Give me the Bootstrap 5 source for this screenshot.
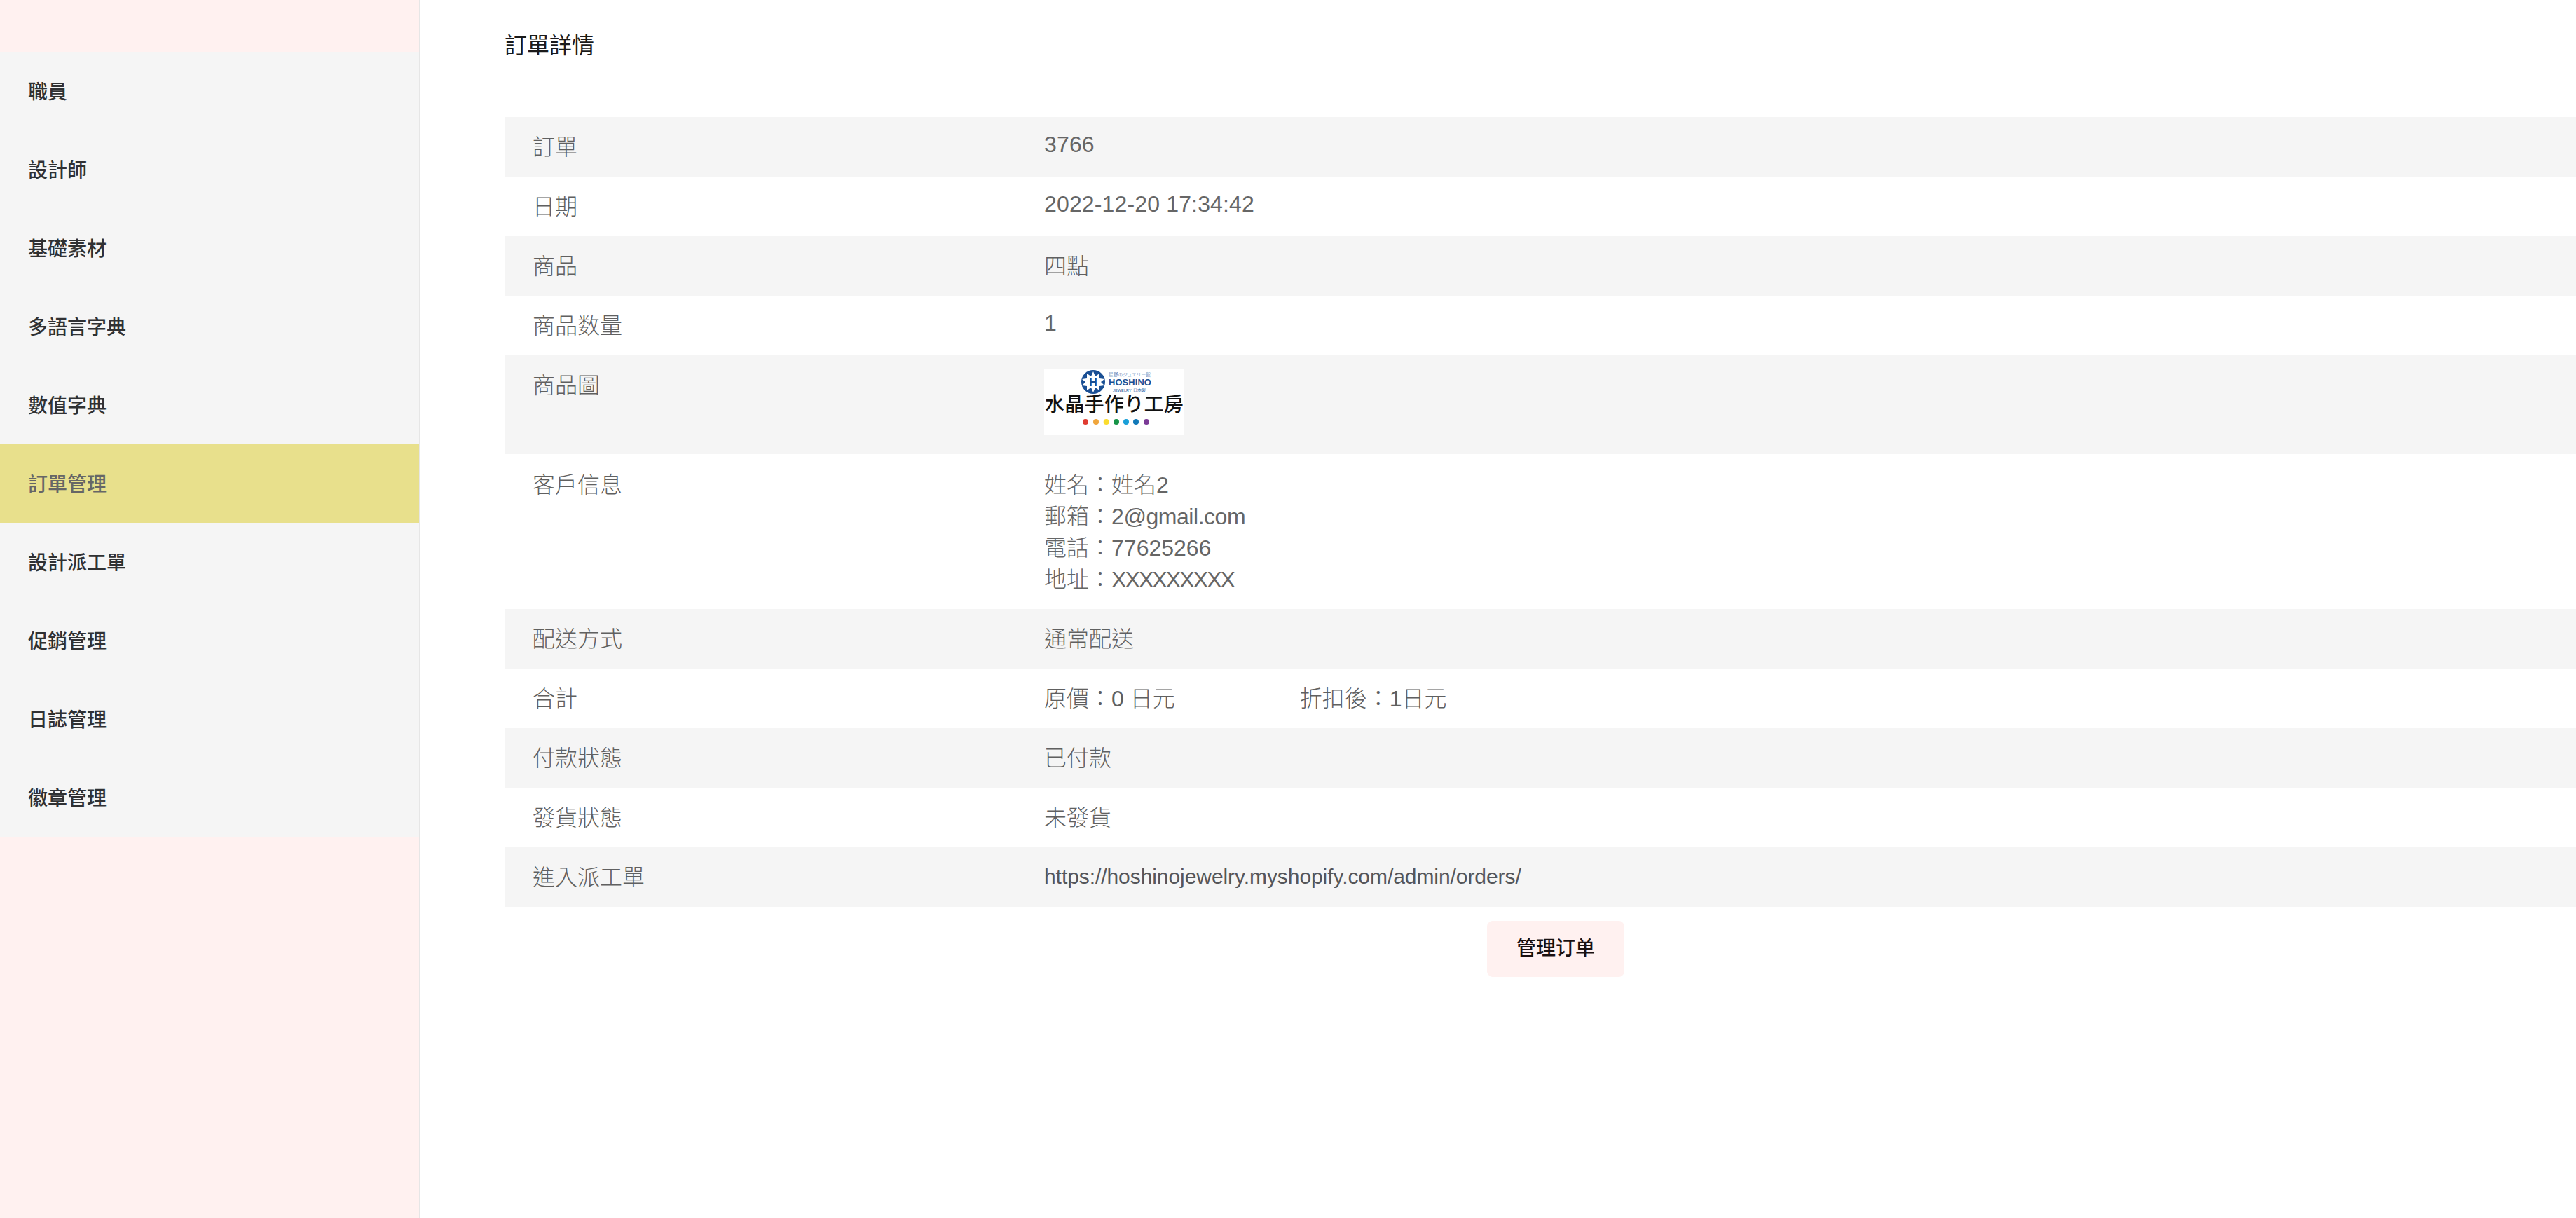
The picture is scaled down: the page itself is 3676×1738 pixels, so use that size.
<!DOCTYPE html>
<html lang="zh-Hant">
<head>
<meta charset="utf-8">
<title>訂單詳情</title>
<link href="https://cdn.jsdelivr.net/npm/bootstrap@5.3.0/dist/css/bootstrap.min.css" rel="stylesheet">
<style>
html,body{height:100%;overflow:hidden}
body{font-family:"Liberation Sans","Noto Sans CJK TC",sans-serif;background:#fff;color:#666}
.app-shell{height:1738px}
.side-bar{width:600px;flex:none;background:#fff1f0;border-right:2px solid #e6e6e6;padding-top:74px}
.side-link{display:flex;align-items:center;height:112px;padding:3px 0 0 40px;background:#f5f5f5;color:#303133;font-size:28px;font-weight:500;text-decoration:none}
.side-link.is-current{background:#e8e08c;color:#666}
.main-pane{flex:1 1 auto;min-width:0;overflow:hidden;padding-left:120px}
.detail-wrap{width:3000px}
.page-heading{font-size:32px;line-height:44px;color:#1a1a1a;margin:0;padding-top:43px;height:167px;font-weight:400}
.info-row{display:flex;min-height:85px;font-size:32px;line-height:45px;font-weight:300;color:#606060}
.info-row:nth-child(odd){background:#f5f5f5}
.info-label{width:770px;flex:none;padding:21px 0 0 40px}
.info-value{flex:1 1 auto;padding-top:17px;letter-spacing:.15px;color:#666}
.val-zh{padding-top:21px;letter-spacing:0;color:#606060}
.img-row{height:141px}
.img-row .info-value{padding-top:20px}
.cust-row{height:221px}
.cust-row .info-label{padding-top:22px}
.cust-row .info-value{padding-top:22px;letter-spacing:0}
.stack-line{height:45px}
.colon-mark{font-family:"Noto Sans CJK SC",sans-serif;line-height:0}
.mail-text{letter-spacing:-.45px}
.xs-text{letter-spacing:-1.9px}
.sum-after{margin-left:178px}
.url-text{font-size:30px;color:#55565a;letter-spacing:-.07px;font-weight:400;padding-top:19px}
.brand-logo{display:block;width:200px;height:94px;background:#fff}
.action-row{padding-top:20px}
.manage-btn{width:196px;height:80px;background:#fff1f0;border:1px solid #fff1f0;border-radius:8px;font-size:28px;font-weight:500;color:#1a1010}
.manage-btn:hover{background:#fde8e6;color:#1a1010}
</style>
</head>
<body>
<div class="d-flex app-shell">
  <nav class="side-bar d-flex flex-column">
    <a class="side-link" href="#">職員</a>
    <a class="side-link" href="#">設計師</a>
    <a class="side-link" href="#">基礎素材</a>
    <a class="side-link" href="#">多語言字典</a>
    <a class="side-link" href="#">數值字典</a>
    <a class="side-link is-current" href="#">訂單管理</a>
    <a class="side-link" href="#">設計派工單</a>
    <a class="side-link" href="#">促銷管理</a>
    <a class="side-link" href="#">日誌管理</a>
    <a class="side-link" href="#">徽章管理</a>
  </nav>
  <main class="main-pane">
    <div class="detail-wrap">
      <h1 class="page-heading">訂單詳情</h1>
      <div class="info-list">
        <div class="info-row"><div class="info-label">訂單</div><div class="info-value">3766</div></div>
        <div class="info-row"><div class="info-label">日期</div><div class="info-value">2022-12-20 17:34:42</div></div>
        <div class="info-row"><div class="info-label">商品</div><div class="info-value val-zh">四點</div></div>
        <div class="info-row"><div class="info-label">商品数量</div><div class="info-value">1</div></div>
        <div class="info-row img-row"><div class="info-label">商品圖</div><div class="info-value">
          <svg class="brand-logo" viewBox="0 0 200 94" role="img" aria-label="HOSHINO 水晶手作り工房">
            <rect width="200" height="94" fill="#fff"/>
            <circle cx="70" cy="18" r="17" fill="#1a4f94"/>
            <polygon points="70,3 73,10 79,6 79,13 86,14 81,18 86,23 79,24 79,30 73,26 70,33 67,26 61,30 61,24 54,23 59,18 54,14 61,13 61,6 67,10" fill="#fff"/>
            <text x="70" y="24" text-anchor="middle" font-family="Liberation Sans" font-size="16" font-weight="700" fill="#1a4f94">H</text>
            <text x="92" y="10" font-family="Noto Sans CJK JP" font-size="6.5" fill="#2a5c9e" textLength="60" lengthAdjust="spacingAndGlyphs">星野のジュエリー館</text>
            <text x="92" y="22.5" font-family="Liberation Sans" font-size="12.5" font-weight="700" fill="#1a4f94" textLength="61" lengthAdjust="spacingAndGlyphs">HOSHINO</text>
            <text x="98" y="32" font-family="Liberation Sans" font-size="5.5" fill="#2a5c9e" textLength="47" lengthAdjust="spacingAndGlyphs">JEWELRY 日本製</text>
            <text x="100" y="60" text-anchor="middle" font-family="Noto Sans CJK JP" font-size="28" font-weight="500" fill="#111" textLength="198" lengthAdjust="spacingAndGlyphs">水晶手作り工房</text>
            <circle cx="59" cy="75" r="4" fill="#e03c31"/>
            <circle cx="74" cy="75" r="4" fill="#f0a63c"/>
            <circle cx="88.7" cy="75" r="4" fill="#fbdc2e"/>
            <circle cx="103" cy="75" r="4" fill="#179447"/>
            <circle cx="117" cy="75" r="4" fill="#1a9fd8"/>
            <circle cx="131" cy="75" r="4" fill="#1279b8"/>
            <circle cx="146" cy="75" r="4" fill="#7b3a96"/>
          </svg>
        </div></div>
        <div class="info-row cust-row"><div class="info-label">客戶信息</div><div class="info-value">
          <div class="stack-line">姓名<span class="colon-mark">：</span>姓名2</div>
          <div class="stack-line">郵箱<span class="colon-mark">：</span><span class="mail-text">2@gmail.com</span></div>
          <div class="stack-line">電話<span class="colon-mark">：</span>77625266</div>
          <div class="stack-line">地址<span class="colon-mark">：</span><span class="xs-text">XXXXXXXXX</span></div>
        </div></div>
        <div class="info-row"><div class="info-label">配送方式</div><div class="info-value val-zh">通常配送</div></div>
        <div class="info-row"><div class="info-label">合計</div><div class="info-value val-zh"><span>原價<span class="colon-mark">：</span>0 日元</span><span class="sum-after">折扣後<span class="colon-mark">：</span>1日元</span></div></div>
        <div class="info-row"><div class="info-label">付款狀態</div><div class="info-value val-zh">已付款</div></div>
        <div class="info-row"><div class="info-label">發貨狀態</div><div class="info-value val-zh">未發貨</div></div>
        <div class="info-row"><div class="info-label">進入派工單</div><div class="info-value url-text">https://hoshinojewelry.myshopify.com/admin/orders/</div></div>
      </div>
      <div class="action-row d-flex justify-content-center">
        <button type="button" class="btn manage-btn p-0">管理订单</button>
      </div>
    </div>
  </main>
</div>
<script src="https://cdn.jsdelivr.net/npm/bootstrap@5.3.0/dist/js/bootstrap.bundle.min.js"></script>
</body>
</html>
